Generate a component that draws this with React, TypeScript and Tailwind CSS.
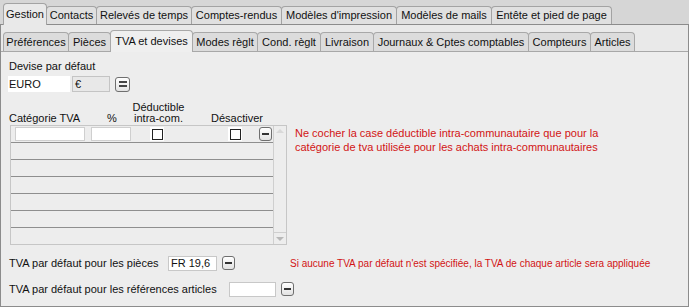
import React from 'react';

const topTabs: [string, number][] = [
  ['Gestion', 44],
  ['Contacts', 51],
  ['Relevés de temps', 96],
  ['Comptes-rendus', 91],
  ["Modèles d'impression", 116],
  ['Modèles de mails', 96],
  ['Entête et pied de page', 121],
];

const subTabs: [string, number][] = [
  ['Préférences', 66],
  ['Pièces', 43],
  ['TVA et devises', 83],
  ['Modes règlt', 66],
  ['Cond. règlt', 64],
  ['Livraison', 54],
  ['Journaux & Cptes comptables', 156],
  ['Compteurs', 63],
  ['Articles', 45],
];

function MinusButton({ className = '' }: { className?: string }) {
  return (
    <div
      className={`flex h-[14px] w-[13px] items-center justify-center rounded-[3px] border border-[#6f6f6f] bg-gradient-to-b from-white to-[#e2e2e2] ${className}`}
    >
      <div className="h-[2px] w-[7px] bg-[#333]" />
    </div>
  );
}

function EqualButton() {
  return (
    <div className="flex h-[15px] w-[15px] flex-col items-center justify-center gap-[2px] rounded-[3px] border border-[#6f6f6f] bg-gradient-to-b from-white to-[#e2e2e2]">
      <div className="h-[2px] w-[8px] bg-[#444]" />
      <div className="h-[2px] w-[8px] bg-[#444]" />
    </div>
  );
}

function Checkbox() {
  return (
    <div className="flex h-[14px] w-[14px] items-center justify-center bg-white">
      <div className="h-[11px] w-[11px] border border-[#222] bg-white" />
    </div>
  );
}

export default function App() {
  return (
    <div className="h-[307px] w-[689px] overflow-hidden bg-[#d6d6d6] font-['Liberation_Sans',Arial,sans-serif] text-[11px] text-[#111]">
      {/* onglets principaux */}
      <div className="flex h-[24px] items-end pl-[3px]">
        {topTabs.map(([label, w], i) => {
          const active = i === 0;
          return (
            <div
              key={label}
              style={{ width: w }}
              className={`-ml-px flex items-center justify-center rounded-t-[4px] border border-b-0 border-[#a3a3a3] first:ml-0 ${
                active ? 'relative z-10 -mb-px h-[22px] bg-[#e9e9e9] pb-[1px]' : 'h-[18px] bg-[#e0e0e0]'
              }`}
            >
              {label}
            </div>
          );
        })}
      </div>

      <div className="flex h-[283px] flex-col border border-[#8c8c8c] bg-[#e9e9e9]">
        {/* sous-onglets */}
        <div className="flex h-[26px] items-end pl-[2px]">
          {subTabs.map(([label, w], i) => {
            const active = i === 2;
            return (
              <div
                key={label}
                style={{ width: w }}
                className={`-ml-px flex items-center justify-center rounded-t-[4px] border border-b-0 border-[#a8a8a8] first:ml-0 ${
                  active ? 'relative z-10 -mb-px h-[22px] bg-[#efefef] pb-[1px]' : 'h-[19px] bg-[#dcdcdc]'
                }`}
              >
                {label}
              </div>
            );
          })}
        </div>

        <div className="flex-1 border-t border-[#a8a8a8] bg-[#ededed] pl-[8px]">
          {/* devise */}
          <div className="mt-[8px] leading-[13px]">Devise par défaut</div>
          <div className="mt-[3px] flex items-center">
            <div className="-ml-px flex h-[16px] w-[62px] items-center bg-white pl-[1px]">EURO</div>
            <div className="ml-[2px] flex h-[16px] w-[38px] items-center border border-[#c4c4c4] bg-[#e8e8e8] pl-[2px]">€</div>
            <div className="ml-[5px]">
              <EqualButton />
            </div>
          </div>

          {/* en-têtes */}
          <div className="mt-[10px] flex items-end leading-[11px]">
            <div className="w-[98px]">Catégorie TVA</div>
            <div className="w-[25px]">%</div>
            <div className="w-[53px] text-center">
              Déductible
              <br />
              intra-com.
            </div>
            <div className="ml-[26px]">Désactiver</div>
          </div>

          <div className="flex">
            {/* tableau */}
            <div className="ml-[1px] mt-[1px] flex h-[120px] w-[277px] border border-[#c6c6c6]">
              <div className="flex w-[263px] flex-col">
                <div className="flex h-[17px] shrink-0 items-center border-b border-[#8e8e8e] pl-[4px]">
                  <div className="h-[14px] w-[70px] border border-[#cfcfcf] bg-white" />
                  <div className="ml-[6px] h-[14px] w-[40px] border border-[#cfcfcf] bg-white" />
                  <div className="ml-[19px]">
                    <Checkbox />
                  </div>
                  <div className="ml-[64px]">
                    <Checkbox />
                  </div>
                  <MinusButton className="ml-[17px]" />
                </div>
                {[0, 1, 2, 3, 4].map((r) => (
                  <div key={r} className="h-[17px] shrink-0 border-b border-[#8e8e8e]" />
                ))}
              </div>
              <div className="flex w-[13px] flex-col border-l border-[#cfcfcf]">
                <div className="flex h-[10px] items-center justify-center">
                  <div className="h-0 w-0 border-x-[4px] border-b-[4px] border-x-transparent border-b-[#d8d8d8]" />
                </div>
                <div className="flex-1" />
                <div className="flex h-[12px] items-center justify-center border-t border-[#cfcfcf]">
                  <div className="h-0 w-0 border-x-[4px] border-t-[4px] border-x-transparent border-t-[#b8b8b8]" />
                </div>
              </div>
            </div>

            <div className="ml-[8px] mt-[2px] leading-[14px] text-[#d21414]">
              Ne cocher la case déductible intra-communautaire que pour la
              <br />
              catégorie de tva utilisée pour les achats intra-communautaires
            </div>
          </div>

          {/* TVA par défaut */}
          <div className="mt-[10px] flex h-[16px] items-center">
            <div className="w-[159px]">TVA par défaut pour les pièces</div>
            <div className="flex h-[15px] w-[49px] items-center border border-[#c8c8c8] bg-white pl-[2px]">FR 19,6</div>
            <MinusButton className="ml-[5px]" />
            <div className="ml-[55px] text-[10px] text-[#d21414]">
              Si aucune TVA par défaut n'est spécifiée, la TVA de chaque article sera appliquée
            </div>
          </div>
          <div className="mt-[10px] flex h-[16px] items-center">
            <div className="w-[220px]">TVA par défaut pour les références articles</div>
            <div className="h-[15px] w-[47px] border border-[#c8c8c8] bg-white" />
            <MinusButton className="ml-[5px]" />
          </div>
        </div>
      </div>
    </div>
  );
}
